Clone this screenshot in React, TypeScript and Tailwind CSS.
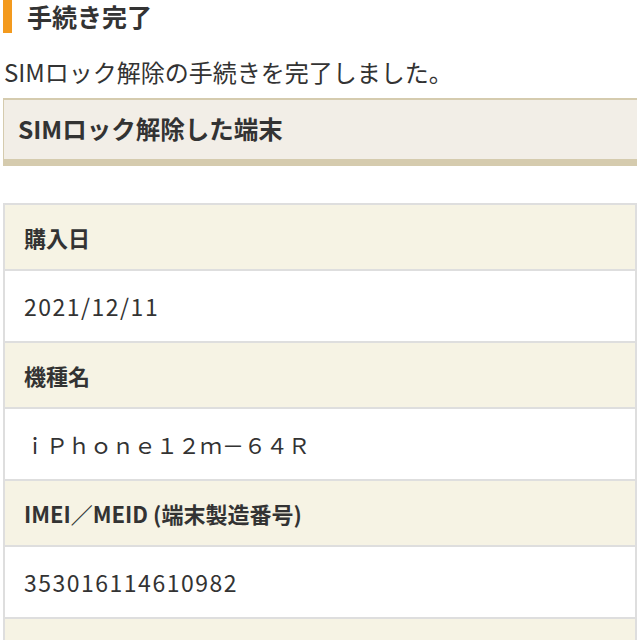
import React from "react";

const rows = [
  { label: "購入日", value: "2021/12/11", wide: false },
  { label: "機種名", value: "ｉＰｈｏｎｅ１２ｍ－６４Ｒ", wide: true },
  { label: "IMEI／MEID (端末製造番号)", value: "353016114610982", wide: false },
  { label: "解除の理由", value: "", wide: false },
];

export default function App() {
  return (
    <div
      className="w-[640px] h-[640px] overflow-hidden bg-white text-[#333]"
      style={{ fontFamily: '"Noto Sans CJK JP", "Liberation Sans", sans-serif' }}
    >
      {/* Page title */}
      <div className="flex items-center h-[33px] pl-[3px]">
        <div className="w-[9px] h-[33px] bg-[#f39a1e]" />
        <h1 className="ml-[15px] text-[25px] font-bold leading-[33px]">手続き完了</h1>
      </div>

      <p className="mt-[24px] pl-[4px] text-[24px] leading-[30px]">
        SIMロック解除の手続きを完了しました。
      </p>

      {/* Section heading */}
      <div className="mt-[11px] mx-[3px] h-[68px] flex items-center bg-[#f2eee7] border-t-2 border-l border-b-[7px] border-[#d5cbae] pl-[14px]">
        <h2 className="text-[24.5px] font-bold leading-none">SIMロック解除した端末</h2>
      </div>

      {/* Device table */}
      <div className="mt-[37px] mx-[3px] border-l-2 border-r-2 border-[#dedede]">
        {rows.map((row) => (
          <div key={row.label}>
            <div className="h-[66px] flex items-center bg-[#f6f3e4] border-t-2 border-[#dedede] pl-[19px]">
              <span className="text-[22px] font-bold leading-none">{row.label}</span>
            </div>
            <div className="h-[72px] flex items-center border-t-2 border-[#dedede] pl-[19px]">
              {row.wide ? (
                <span className="text-[22px] leading-none">{row.value}</span>
              ) : (
                <span className="text-[23px] leading-none tracking-[1.5px]">{row.value}</span>
              )}
            </div>
          </div>
        ))}
      </div>
    </div>
  );
}
